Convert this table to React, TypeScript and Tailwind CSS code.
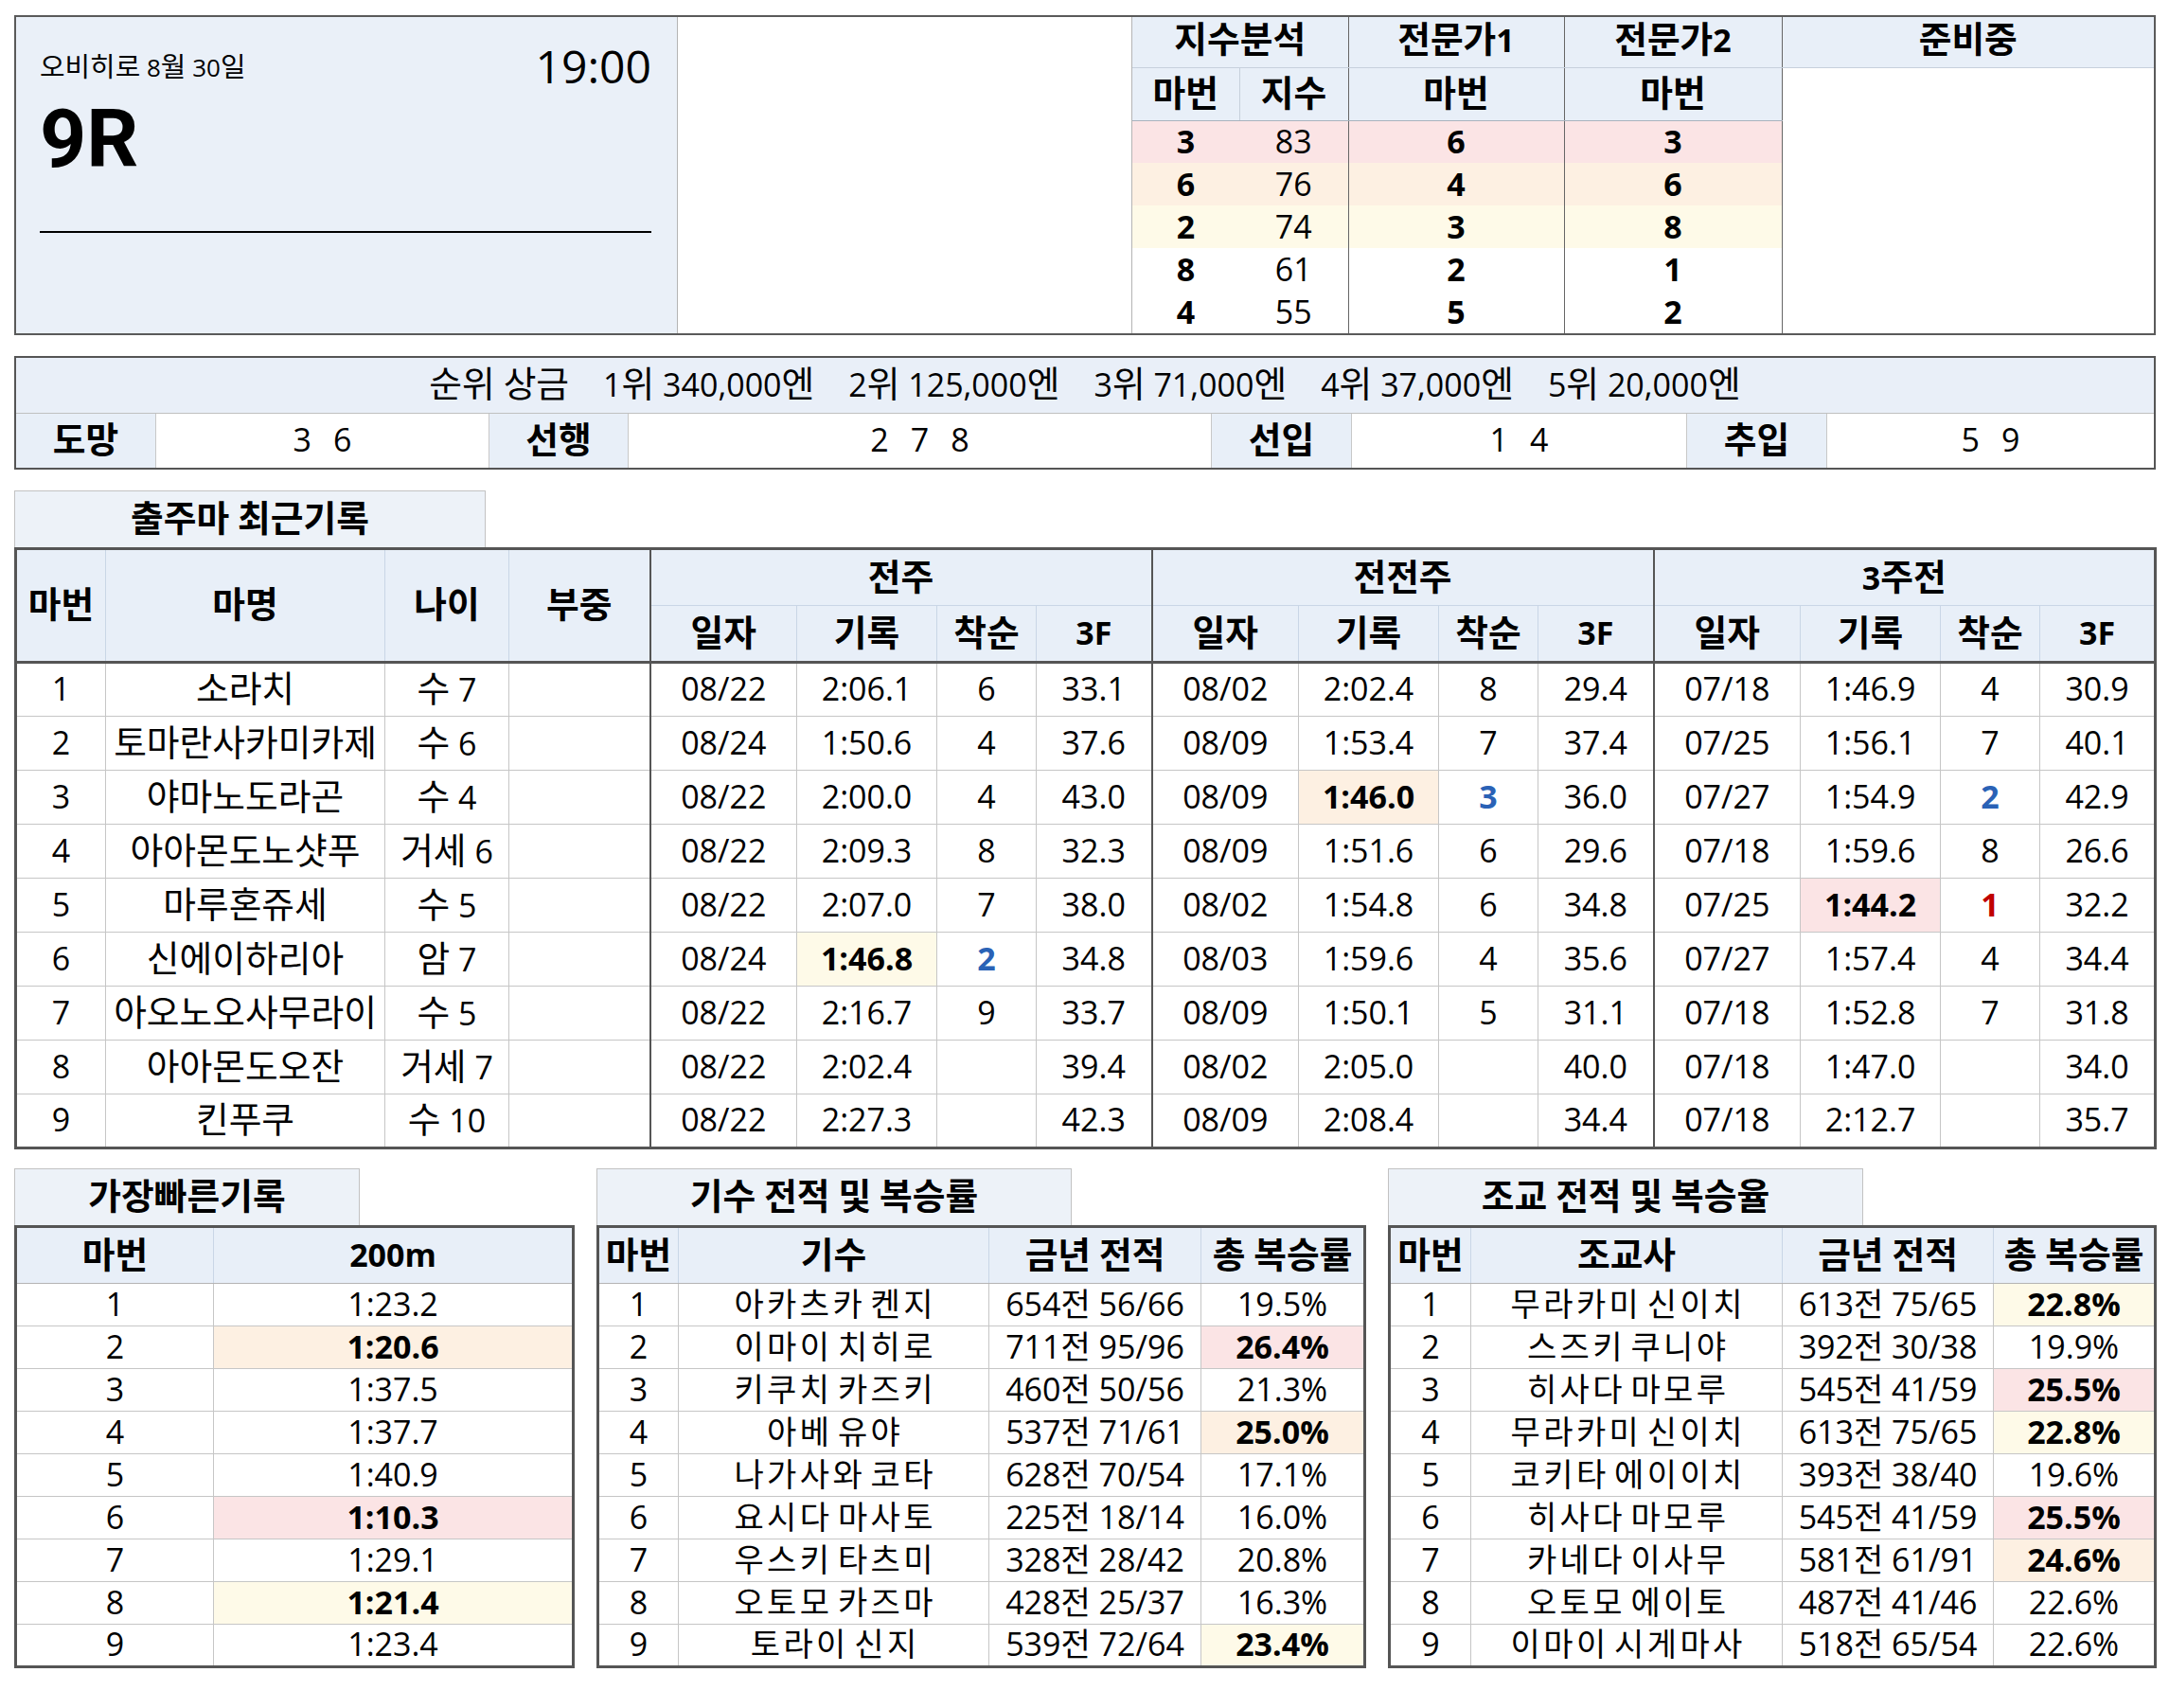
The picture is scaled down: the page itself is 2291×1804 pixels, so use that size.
import React from "react";

const FONT = "font-['Open_Sans','Noto_Sans_CJK_KR',sans-serif]";

type G = { d: string; t: string; r: string; f: string; tb?: string; rc?: string };
type Row = { n: string; name: string; age: string; g: G[] };

const PINK = "bg-[#fbe4e5]";
const ORANGE = "bg-[#fdf0e2]";
const YELLOW = "bg-[#fefae8]";
const BLUE = "text-[#2a62b6] font-bold";
const RED = "text-[#c00000] font-bold";

const rows: Row[] = [
  { n: "1", name: "소라치", age: "수 7", g: [
    { d: "08/22", t: "2:06.1", r: "6", f: "33.1" },
    { d: "08/02", t: "2:02.4", r: "8", f: "29.4" },
    { d: "07/18", t: "1:46.9", r: "4", f: "30.9" } ] },
  { n: "2", name: "토마란사카미카제", age: "수 6", g: [
    { d: "08/24", t: "1:50.6", r: "4", f: "37.6" },
    { d: "08/09", t: "1:53.4", r: "7", f: "37.4" },
    { d: "07/25", t: "1:56.1", r: "7", f: "40.1" } ] },
  { n: "3", name: "야마노도라곤", age: "수 4", g: [
    { d: "08/22", t: "2:00.0", r: "4", f: "43.0" },
    { d: "08/09", t: "1:46.0", r: "3", f: "36.0", tb: ORANGE, rc: BLUE },
    { d: "07/27", t: "1:54.9", r: "2", f: "42.9", rc: BLUE } ] },
  { n: "4", name: "아아몬도노샷푸", age: "거세 6", g: [
    { d: "08/22", t: "2:09.3", r: "8", f: "32.3" },
    { d: "08/09", t: "1:51.6", r: "6", f: "29.6" },
    { d: "07/18", t: "1:59.6", r: "8", f: "26.6" } ] },
  { n: "5", name: "마루혼쥬세", age: "수 5", g: [
    { d: "08/22", t: "2:07.0", r: "7", f: "38.0" },
    { d: "08/02", t: "1:54.8", r: "6", f: "34.8" },
    { d: "07/25", t: "1:44.2", r: "1", f: "32.2", tb: PINK, rc: RED } ] },
  { n: "6", name: "신에이하리아", age: "암 7", g: [
    { d: "08/24", t: "1:46.8", r: "2", f: "34.8", tb: YELLOW, rc: BLUE },
    { d: "08/03", t: "1:59.6", r: "4", f: "35.6" },
    { d: "07/27", t: "1:57.4", r: "4", f: "34.4" } ] },
  { n: "7", name: "아오노오사무라이", age: "수 5", g: [
    { d: "08/22", t: "2:16.7", r: "9", f: "33.7" },
    { d: "08/09", t: "1:50.1", r: "5", f: "31.1" },
    { d: "07/18", t: "1:52.8", r: "7", f: "31.8" } ] },
  { n: "8", name: "아아몬도오잔", age: "거세 7", g: [
    { d: "08/22", t: "2:02.4", r: "", f: "39.4" },
    { d: "08/02", t: "2:05.0", r: "", f: "40.0" },
    { d: "07/18", t: "1:47.0", r: "", f: "34.0" } ] },
  { n: "9", name: "킨푸쿠", age: "수 10", g: [
    { d: "08/22", t: "2:27.3", r: "", f: "42.3" },
    { d: "08/09", t: "2:08.4", r: "", f: "34.4" },
    { d: "07/18", t: "2:12.7", r: "", f: "35.7" } ] },
];

const fastest: { v: string; bg?: string }[] = [
  { v: "1:23.2" }, { v: "1:20.6", bg: ORANGE }, { v: "1:37.5" }, { v: "1:37.7" }, { v: "1:40.9" },
  { v: "1:10.3", bg: PINK }, { v: "1:29.1" }, { v: "1:21.4", bg: YELLOW }, { v: "1:23.4" },
];

type P = { name: string; rec: string; pct: string; bg?: string };
const jockeys: P[] = [
  { name: "아카츠카 켄지", rec: "654전 56/66", pct: "19.5%" },
  { name: "이마이 치히로", rec: "711전 95/96", pct: "26.4%", bg: PINK },
  { name: "키쿠치 카즈키", rec: "460전 50/56", pct: "21.3%" },
  { name: "아베 유야", rec: "537전 71/61", pct: "25.0%", bg: ORANGE },
  { name: "나가사와 코타", rec: "628전 70/54", pct: "17.1%" },
  { name: "요시다 마사토", rec: "225전 18/14", pct: "16.0%" },
  { name: "우스키 타츠미", rec: "328전 28/42", pct: "20.8%" },
  { name: "오토모 카즈마", rec: "428전 25/37", pct: "16.3%" },
  { name: "토라이 신지", rec: "539전 72/64", pct: "23.4%", bg: YELLOW },
];
const trainers: P[] = [
  { name: "무라카미 신이치", rec: "613전 75/65", pct: "22.8%", bg: YELLOW },
  { name: "스즈키 쿠니야", rec: "392전 30/38", pct: "19.9%" },
  { name: "히사다 마모루", rec: "545전 41/59", pct: "25.5%", bg: PINK },
  { name: "무라카미 신이치", rec: "613전 75/65", pct: "22.8%", bg: YELLOW },
  { name: "코키타 에이이치", rec: "393전 38/40", pct: "19.6%" },
  { name: "히사다 마모루", rec: "545전 41/59", pct: "25.5%", bg: PINK },
  { name: "카네다 이사무", rec: "581전 61/91", pct: "24.6%", bg: ORANGE },
  { name: "오토모 에이토", rec: "487전 41/46", pct: "22.6%" },
  { name: "이마이 시게마사", rec: "518전 65/54", pct: "22.6%" },
];

/* Hangul runs are drawn slightly larger (or, in the tight 45px rows, tracked wider) to match the reference's proportions */
function K({ t, tight }: { t: string; tight?: boolean }) {
  const parts = t.split(/([\u3131-\u318E\uAC00-\uD7A3]+)/);
  const cls = tight
    ? "inline-block tracking-[0.1em] -mr-[0.1em] leading-none"
    : "inline-block text-[1.11em] leading-none";
  return (
    <>
      {parts.map((p, i) =>
        /[\u3131-\u318E\uAC00-\uD7A3]/.test(p) ? (
          <span key={i} className={cls}>{p}</span>
        ) : (
          <React.Fragment key={i}>{p}</React.Fragment>
        )
      )}
    </>
  );
}

const TH = "bg-[#e8eff8] font-bold text-[34px] leading-none text-center align-middle border border-[#c9d6e6] whitespace-pre pb-[3px]";
const TD = "text-[34px] leading-none text-center align-middle border border-[#c6c6c6] whitespace-pre pb-[3px]";
const GL = " border-l-2 border-l-[#555]";
const HB = " border-b-[3px] border-b-[#555]";

function Title({ text, w }: { text: string; w: string }) {
  return (
    <div className={`${w} h-[60px] border border-b-0 border-[#c2c2c2] bg-[#edf2f8] flex items-center justify-center text-[34px] font-bold leading-none pb-[3px]`}>
      <div className="whitespace-pre"><K t={text} /></div>
    </div>
  );
}

function Digits({ items }: { items: string[] }) {
  return (
    <div className="flex items-center justify-center gap-[23px] text-[34px] leading-none">
      {items.map((d, i) => (
        <span key={i}>{d}</span>
      ))}
    </div>
  );
}

function TopTable() {
  const H1 = "bg-[#e8eff8] font-bold text-[34px] leading-none text-center align-middle border-b border-b-[#c7d0dc] pb-[6px]";
  const H2 = "bg-[#e8eff8] font-bold text-[34px] leading-none text-center align-middle border-b border-b-[#a9b2bd] pb-[3px]";
  const D = "text-[34px] leading-none text-center align-middle pb-[2px]";
  const V = " border-l border-l-[#666]";
  const data = [
    { a: "3", b: "83", c: "6", d: "3", bg: "bg-[#fbe4e5]" },
    { a: "6", b: "76", c: "4", d: "6", bg: "bg-[#fdf0e2]" },
    { a: "2", b: "74", c: "3", d: "8", bg: "bg-[#fefae8]" },
    { a: "8", b: "61", c: "2", d: "1", bg: "" },
    { a: "4", b: "55", c: "5", d: "2", bg: "" },
  ];
  return (
    <table className="table-fixed w-[1079px] border-collapse">
      <colgroup>
        <col className="w-[113px]" />
        <col className="w-[115px]" />
        <col className="w-[228px]" />
        <col className="w-[230px]" />
        <col className="w-[393px]" />
      </colgroup>
      <tbody>
        <tr className="h-[53px]">
          <td colSpan={2} className={H1}><K t="지수분석" /></td>
          <td className={H1 + V}><K t="전문가1" /></td>
          <td className={H1 + V}><K t="전문가2" /></td>
          <td className={H1 + V}><K t="준비중" /></td>
        </tr>
        <tr className="h-[56px]">
          <td className={H2 + " border-r border-r-[#c7d0dc]"}><K t="마번" /></td>
          <td className={H2}><K t="지수" /></td>
          <td className={H2 + V}><K t="마번" /></td>
          <td className={H2 + V}><K t="마번" /></td>
          <td rowSpan={6} className={"bg-white" + V}></td>
        </tr>
        {data.map((r, i) => (
          <tr key={i} className="h-[45px]">
            <td className={`${D} ${r.bg} font-bold`}>{r.a}</td>
            <td className={`${D} ${r.bg}`}>{r.b}</td>
            <td className={`${D} ${r.bg} font-bold` + V}>{r.c}</td>
            <td className={`${D} ${r.bg} font-bold` + V}>{r.d}</td>
          </tr>
        ))}
      </tbody>
    </table>
  );
}

function PersonTable({ title, head, list, widths }: { title: string; head: string; list: P[]; widths: "j" | "t" }) {
  const isJ = widths === "j";
  return (
    <div className={isJ ? "w-[810px]" : "w-[809px]"}>
      <Title text={title} w="w-[502px]" />
      <table className="table-fixed w-full border-collapse border-[3px] border-[#555]">
        <colgroup>
          <col className={isJ ? "w-[85px]" : "w-[86px]"} />
          <col className={isJ ? "w-[328px]" : "w-[329px]"} />
          <col className={isJ ? "w-[224px]" : "w-[223px]"} />
          <col className={isJ ? "w-[173px]" : "w-[171px]"} />
        </colgroup>
        <thead>
          <tr className="h-[60px]">
            <th className={TH + " border-b-[#b4b4b4]"}><K t="마번" /></th>
            <th className={TH + " border-b-[#b4b4b4]"}><K t={head} /></th>
            <th className={TH + " border-b-[#b4b4b4]"}><K t="금년 전적" /></th>
            <th className={TH + " border-b-[#b4b4b4]"}><K t="총 복승률" /></th>
          </tr>
        </thead>
        <tbody>
          {list.map((p, i) => (
            <tr key={i} className="h-[45px]">
              <td className={TD}>{i + 1}</td>
              <td className={TD}><K t={p.name} tight /></td>
              <td className={TD}><K t={p.rec} tight /></td>
              <td className={`${TD} ${p.bg ? p.bg + " font-bold" : ""}`}>{p.pct}</td>
            </tr>
          ))}
        </tbody>
      </table>
    </div>
  );
}

function LabelCell({ t, first }: { t: string; first?: boolean }) {
  return (
    <div className={`bg-[#e8eff8] ${first ? "" : "border-l border-[#c8c8c8]"} flex items-center justify-center font-bold text-[34px] leading-none pb-[4px]`}>
      <div><K t={t} /></div>
    </div>
  );
}

function ValueCell({ items }: { items: string[] }) {
  return (
    <div className="bg-white border-l border-[#c8c8c8] flex items-center justify-center pb-[4px]">
      <Digits items={items} />
    </div>
  );
}

export default function App() {
  return (
    <div className={`${FONT} w-[2291px] min-h-[1804px] bg-white text-black pt-[16px] pl-[15px]`}>
      <div className="w-[2262px]">
        {/* Top header */}
        <div className="flex border-2 border-[#5a5a5a]">
          <div className="w-[699px] shrink-0 bg-[#eaf0f8] border-r border-[#b4b4b4] pt-[30px] pl-[25px] pr-[27px]">
            <div className="flex items-center justify-between h-[44px]">
              <div className="text-[26px] leading-none whitespace-pre"><K t="오비히로 8월 30일" /></div>
              <div className="text-[48px] leading-none">19:00</div>
            </div>
            <div className="mt-[12px] font-['Roboto',sans-serif] text-[86px] font-bold leading-none">9R</div>
            <div className="mt-[54px] h-[2px] w-[646px] bg-black" />
          </div>
          <div className="w-[480px] shrink-0 bg-white border-r border-[#b4b4b4]" />
          <TopTable />
        </div>

        {/* Prize / positions */}
        <div className="mt-[22px] border-2 border-[#555]">
          <div className="h-[58px] bg-[#e9eff8] flex items-center justify-center gap-[36px] text-[34px] leading-none pb-[4px]">
            <div className="whitespace-pre"><K t="순위 상금" /></div>
            <div className="whitespace-pre"><K t="1위 340,000엔" /></div>
            <div className="whitespace-pre"><K t="2위 125,000엔" /></div>
            <div className="whitespace-pre"><K t="3위 71,000엔" /></div>
            <div className="whitespace-pre"><K t="4위 37,000엔" /></div>
            <div className="whitespace-pre"><K t="5위 20,000엔" /></div>
          </div>
          <div className="grid grid-cols-[147px_352px_147px_616px_148px_354px_148px_1fr] h-[58px] border-t border-[#c0c0c0]">
            <LabelCell t="도망" first />
            <ValueCell items={["3", "6"]} />
            <LabelCell t="선행" />
            <ValueCell items={["2", "7", "8"]} />
            <LabelCell t="선입" />
            <ValueCell items={["1", "4"]} />
            <LabelCell t="추입" />
            <ValueCell items={["5", "9"]} />
          </div>
        </div>

        {/* Main table */}
        <div className="mt-[22px]">
          <Title text="출주마 최근기록" w="w-[498px]" />
          <table className="table-fixed w-[2262px] border-collapse border-[3px] border-[#555]">
            <colgroup>
              <col className="w-[95px]" />
              <col className="w-[295px]" />
              <col className="w-[131px]" />
              <col className="w-[149px]" />
              {[0, 1, 2].map((k) => (
                <React.Fragment key={k}>
                  <col className="w-[155px]" />
                  <col className="w-[148px]" />
                  <col className="w-[105px]" />
                  <col className="w-[122px]" />
                </React.Fragment>
              ))}
            </colgroup>
            <thead>
              <tr className="h-[60px]">
                <th rowSpan={2} className={TH + HB}><K t="마번" /></th>
                <th rowSpan={2} className={TH + HB}><K t="마명" /></th>
                <th rowSpan={2} className={TH + HB}><K t="나이" /></th>
                <th rowSpan={2} className={TH + HB}><K t="부중" /></th>
                <th colSpan={4} className={TH + GL}><K t="전주" /></th>
                <th colSpan={4} className={TH + GL}><K t="전전주" /></th>
                <th colSpan={4} className={TH + GL}><K t="3주전" /></th>
              </tr>
              <tr className="h-[60px]">
                {[0, 1, 2].map((k) => (
                  <React.Fragment key={k}>
                    <th className={TH + HB + GL}><K t="일자" /></th>
                    <th className={TH + HB}><K t="기록" /></th>
                    <th className={TH + HB}><K t="착순" /></th>
                    <th className={TH + HB}>3F</th>
                  </React.Fragment>
                ))}
              </tr>
            </thead>
            <tbody>
              {rows.map((r) => (
                <tr key={r.n} className="h-[57px]">
                  <td className={TD}>{r.n}</td>
                  <td className={TD}><K t={r.name} /></td>
                  <td className={TD}><K t={r.age} /></td>
                  <td className={TD}></td>
                  {r.g.map((g, k) => (
                    <React.Fragment key={k}>
                      <td className={TD + GL}>{g.d}</td>
                      <td className={`${TD} ${g.tb ? g.tb + " font-bold" : ""}`}>{g.t}</td>
                      <td className={`${TD} ${g.rc ?? ""}`}>{g.r}</td>
                      <td className={TD}>{g.f}</td>
                    </React.Fragment>
                  ))}
                </tr>
              ))}
            </tbody>
          </table>
        </div>

        {/* Bottom tables */}
        <div className="mt-[20px] flex gap-[26px]">
          <div className="w-[589px]">
            <Title text="가장빠른기록" w="w-[365px]" />
            <table className="table-fixed w-full border-collapse border-[3px] border-[#555]">
              <colgroup>
                <col className="w-[209px]" />
                <col className="w-[380px]" />
              </colgroup>
              <thead>
                <tr className="h-[60px]">
                  <th className={TH + " border-b-[#b4b4b4]"}><K t="마번" /></th>
                  <th className={TH + " border-b-[#b4b4b4]"}>200m</th>
                </tr>
              </thead>
              <tbody>
                {fastest.map((f, i) => (
                  <tr key={i} className="h-[45px]">
                    <td className={TD}>{i + 1}</td>
                    <td className={`${TD} ${f.bg ? f.bg + " font-bold" : ""}`}>{f.v}</td>
                  </tr>
                ))}
              </tbody>
            </table>
          </div>
          <PersonTable title="기수 전적 및 복승률" head="기수" list={jockeys} widths="j" />
          <PersonTable title="조교 전적 및 복승율" head="조교사" list={trainers} widths="t" />
        </div>
      </div>
    </div>
  );
}
